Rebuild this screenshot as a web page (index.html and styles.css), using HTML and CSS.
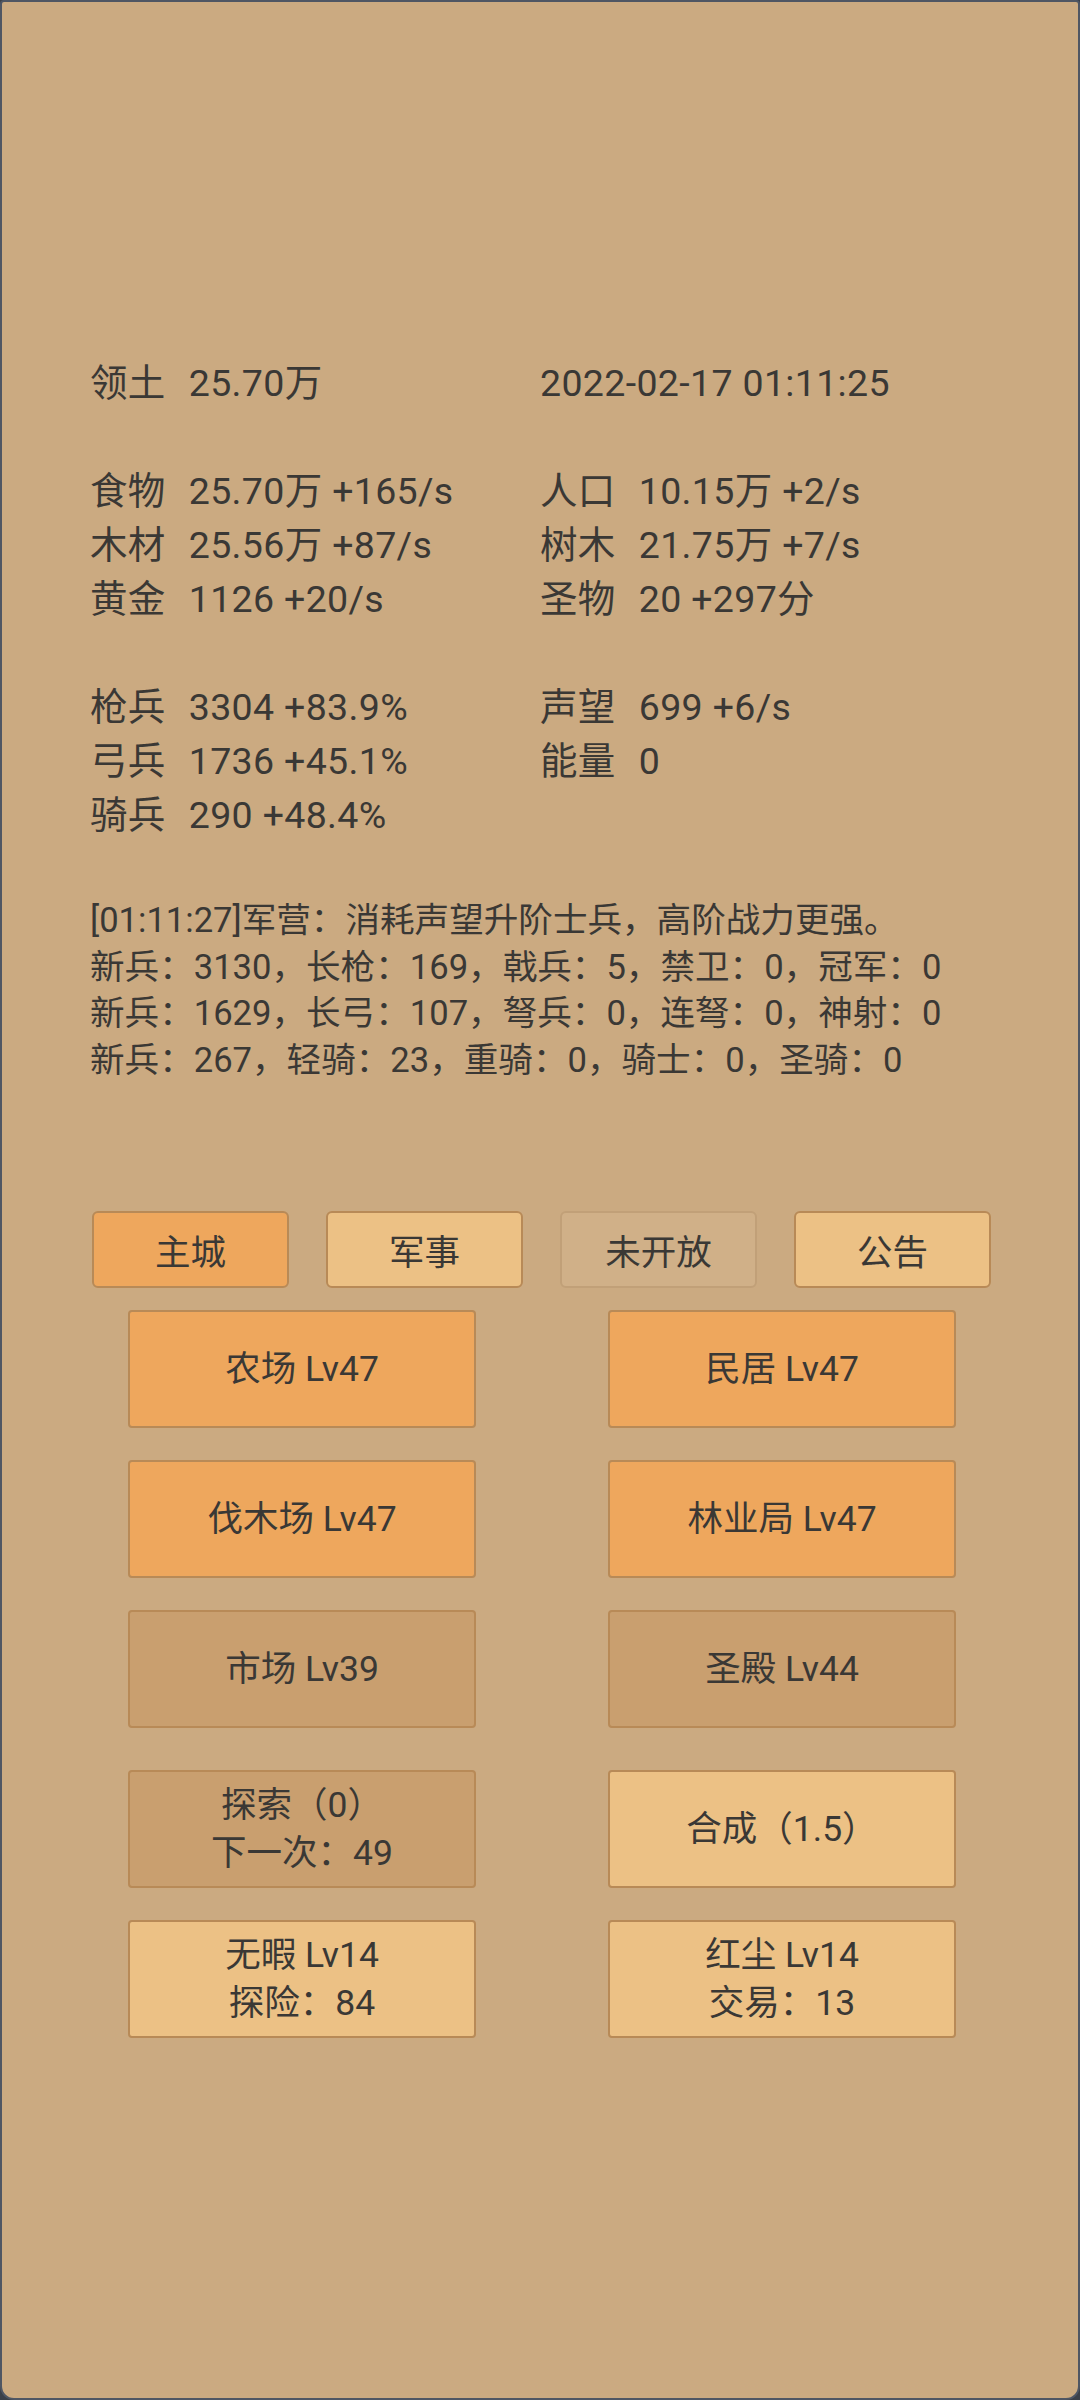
FILE: index.html
```html
<!DOCTYPE html>
<html lang="zh-CN">
<head>
<meta charset="utf-8">
<title>主城</title>
<link rel="stylesheet" href="styles.css">
</head>
<body>
<div class="screen">
  <div class="content">
    <div class="stats">
      <div class="group">
        <div class="row"><span class="k">领土</span><span class="v">25.70万</span></div>
        <div class="row"><span class="v">2022-02-17 01:11:25</span></div>
      </div>
      <div class="group">
        <div class="row"><span class="k">食物</span><span class="v">25.70万 +165/s</span></div>
        <div class="row"><span class="k">人口</span><span class="v">10.15万 +2/s</span></div>
        <div class="row"><span class="k">木材</span><span class="v">25.56万 +87/s</span></div>
        <div class="row"><span class="k">树木</span><span class="v">21.75万 +7/s</span></div>
        <div class="row"><span class="k">黄金</span><span class="v">1126 +20/s</span></div>
        <div class="row"><span class="k">圣物</span><span class="v">20 +297分</span></div>
      </div>
      <div class="group">
        <div class="row"><span class="k">枪兵</span><span class="v">3304 +83.9%</span></div>
        <div class="row"><span class="k">声望</span><span class="v">699 +6/s</span></div>
        <div class="row"><span class="k">弓兵</span><span class="v">1736 +45.1%</span></div>
        <div class="row"><span class="k">能量</span><span class="v">0</span></div>
        <div class="row"><span class="k">骑兵</span><span class="v">290 +48.4%</span></div>
      </div>
    </div>

    <div class="log">
      <div>[01:11:27]军营：消耗声望升阶士兵，高阶战力更强。</div>
      <div>新兵：3130，长枪：169，戟兵：5，禁卫：0，冠军：0</div>
      <div>新兵：1629，长弓：107，弩兵：0，连弩：0，神射：0</div>
      <div>新兵：267，轻骑：23，重骑：0，骑士：0，圣骑：0</div>
    </div>

    <div class="tabs">
      <div class="tab tab-active">主城</div>
      <div class="tab tab-light">军事</div>
      <div class="tab tab-off">未开放</div>
      <div class="tab tab-light">公告</div>
    </div>

    <div class="grid">
      <div class="btn btn-orange">农场 Lv47</div>
      <div class="btn btn-orange">民居 Lv47</div>
      <div class="btn btn-orange">伐木场 Lv47</div>
      <div class="btn btn-orange">林业局 Lv47</div>
      <div class="btn btn-brown">市场 Lv39</div>
      <div class="btn btn-brown">圣殿 Lv44</div>
    </div>

    <div class="grid grid-second">
      <div class="btn btn-brown"><span>探索（0）</span><span>下一次：49</span></div>
      <div class="btn btn-light"><span>合成（1.5）</span></div>
      <div class="btn btn-light"><span>无暇 Lv14</span><span>探险：84</span></div>
      <div class="btn btn-light"><span>红尘 Lv14</span><span>交易：13</span></div>
    </div>
  </div>
</div>
</body>
</html>
```

FILE: styles.css
```css
html, body {
  margin: 0;
  padding: 0;
  background: #3b4049;
}

.screen {
  box-sizing: border-box;
  width: 1080px;
  height: 2400px;
  background: #cbaa81;
  border: 2px solid #4f5663;
  border-radius: 4px 4px 14px 14px;
  font-family: Roboto, "Noto Sans CJK SC", sans-serif;
  color: #3a3835;
  overflow: hidden;
}

.content {
  padding: 354px 0 0 88px;
}

.stats {
  font-size: 37.5px;
  line-height: 54px;
  letter-spacing: 0.35px;
}

.group {
  display: grid;
  grid-template-columns: 450px 1fr;
}

.group + .group {
  margin-top: 54px;
}

.row {
  display: flex;
  white-space: nowrap;
}

.k {
  margin-right: 23px;
}

.log {
  margin-top: 55px;
  font-size: 34.6px;
  line-height: 46.5px;
  white-space: nowrap;
}

.tabs {
  display: flex;
  gap: 37px;
  margin-top: 128px;
  margin-left: 2px;
}

.tab {
  box-sizing: border-box;
  width: 197px;
  height: 77px;
  display: flex;
  align-items: center;
  justify-content: center;
  font-size: 35.5px;
  border: 2px solid #b88a57;
  border-radius: 6px;
}

.tab-active {
  background: #eea75d;
}

.tab-light {
  background: #ecc185;
}

.tab-off {
  background: #d0b088;
  border-color: #c1a078;
}

.grid {
  display: grid;
  grid-template-columns: 348px 348px;
  column-gap: 132px;
  row-gap: 32px;
  margin-top: 22px;
  margin-left: 38px;
}

.grid-second {
  margin-top: 42px;
}

.btn {
  box-sizing: border-box;
  height: 118px;
  display: flex;
  flex-direction: column;
  align-items: center;
  justify-content: center;
  font-size: 35.5px;
  line-height: 48px;
  border: 2px solid #b88a57;
  border-radius: 4px;
  white-space: nowrap;
}

.btn-orange {
  background: #eea75d;
}

.btn-brown {
  background: #c99f6f;
}

.btn-light {
  background: #ecc185;
}
```
